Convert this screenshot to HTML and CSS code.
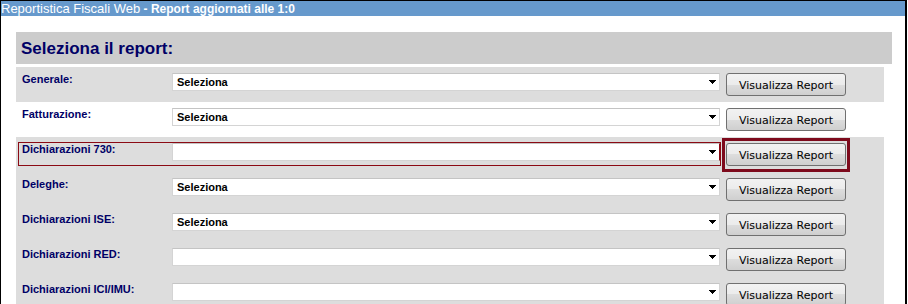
FILE: index.html
```html
<!DOCTYPE html>
<html lang="it">
<head>
    <meta charset="UTF-8">
    <title>Reportistica Fiscali Web</title>
    <link rel="stylesheet" href="styles.css">
</head>
<body>
    <div class="frame">
        <div class="title-bar"><span class="app-name">Reportistica Fiscali Web</span> <b>- Report aggiornati alle 1:0</b></div>

        <div class="page">
            <h1 class="page-title">Seleziona il report:</h1>

            <div class="report-list">
                <div class="report-row">
                    <div class="field">
                        <label for="r-generale">Generale:</label>
                        <select id="r-generale"><option>Seleziona</option></select>
                    </div>
                    <div class="btn-frame"><button>Visualizza Report</button></div>
                </div>

                <div class="report-row alt">
                    <div class="field">
                        <label for="r-fatt">Fatturazione:</label>
                        <select id="r-fatt"><option>Seleziona</option></select>
                    </div>
                    <div class="btn-frame"><button>Visualizza Report</button></div>
                </div>

                <div class="report-row">
                    <div class="field active">
                        <label for="r-730">Dichiarazioni 730:</label>
                        <select id="r-730"><option></option></select>
                    </div>
                    <div class="btn-frame active"><button>Visualizza Report</button></div>
                </div>

                <div class="report-row">
                    <div class="field">
                        <label for="r-deleghe">Deleghe:</label>
                        <select id="r-deleghe"><option>Seleziona</option></select>
                    </div>
                    <div class="btn-frame"><button>Visualizza Report</button></div>
                </div>

                <div class="report-row">
                    <div class="field">
                        <label for="r-ise">Dichiarazioni ISE:</label>
                        <select id="r-ise"><option>Seleziona</option></select>
                    </div>
                    <div class="btn-frame"><button>Visualizza Report</button></div>
                </div>

                <div class="report-row">
                    <div class="field">
                        <label for="r-red">Dichiarazioni RED:</label>
                        <select id="r-red"><option></option></select>
                    </div>
                    <div class="btn-frame"><button>Visualizza Report</button></div>
                </div>

                <div class="report-row">
                    <div class="field">
                        <label for="r-ici">Dichiarazioni ICI/IMU:</label>
                        <select id="r-ici"><option></option></select>
                    </div>
                    <div class="btn-frame"><button>Visualizza Report</button></div>
                </div>
            </div>
        </div>
    </div>
</body>
</html>
```

FILE: styles.css
```css
/* styles.css */
body {
    margin: 0;
    font-family: "Liberation Sans", Arial, sans-serif;
    background: #fff;
}

.frame {
    width: 904px;
    border-top: 1px solid #000;
    border-left: 1px solid #000;
    border-right: 2px solid #000;
}

.title-bar {
    background-color: #6699cc;
    color: #fff;
    font-size: 12px;
    line-height: 15px;
    height: 15px;
    white-space: nowrap;
}

.title-bar .app-name {
    font-size: 13px;
}

.title-bar b {
    font-size: 12px;
}

.page {
    padding: 16px 0 0 15px;
}

.page-title {
    margin: 0;
    width: 871px;
    height: 32px;
    padding-left: 5px;
    background-color: #cccccc;
    color: #000066;
    font-size: 17px;
    line-height: 33px;
    font-weight: bold;
}

.report-list {
    margin-top: 3px;
    width: 868px;
}

.report-row {
    display: flex;
    align-items: flex-start;
    height: 35px;
    padding-left: 2px;
    background-color: #dddddd;
}

.report-row.alt {
    background-color: #fff;
}

.field {
    display: flex;
    align-items: flex-start;
    width: 701px;
    margin-top: 5px;
    padding-bottom: 4px;
    border: 1px solid transparent;
}

.field.active {
    border-color: #8b0a14;
}

.field label {
    width: 150px;
    padding-left: 3px;
    color: #000066;
    font-size: 11px;
    font-weight: bold;
    line-height: 13px;
}

.field select {
    appearance: none;
    -webkit-appearance: none;
    width: 548px;
    height: 18px;
    margin: 0;
    padding: 0 16px 0 4px;
    border: 1px solid #d4d4d4;
    border-top-color: #c4c4c4;
    border-radius: 0;
    font-family: "Liberation Sans", Arial, sans-serif;
    font-size: 11px;
    font-weight: bold;
    color: #000;
    background-color: #fff;
    background-image:
        linear-gradient(to bottom left, #000 50%, transparent 50%),
        linear-gradient(to bottom right, #000 50%, transparent 50%);
    background-size: 4px 4px, 4px 4px;
    background-position: right 6px center, right 2px center;
    background-repeat: no-repeat;
}

.field.active select {
    border-right-color: #8b0a14;
}

.btn-frame {
    margin-top: 1px;
    margin-left: 1px;
    padding: 2px 1px 3px 1px;
    border: 3px solid transparent;
}

.btn-frame.active {
    border-color: #7d0a1c;
}

.btn-frame button {
    display: block;
    width: 120px;
    height: 23px;
    padding: 1px 0 0;
    border: 1px solid #707070;
    border-radius: 3px;
    background: linear-gradient(to bottom, #f2f2f2 0%, #ebebeb 50%, #dddddd 50%, #cfcfcf 100%);
    font-family: "DejaVu Sans", Tahoma, sans-serif;
    font-size: 11px;
    color: #000;
}
```
